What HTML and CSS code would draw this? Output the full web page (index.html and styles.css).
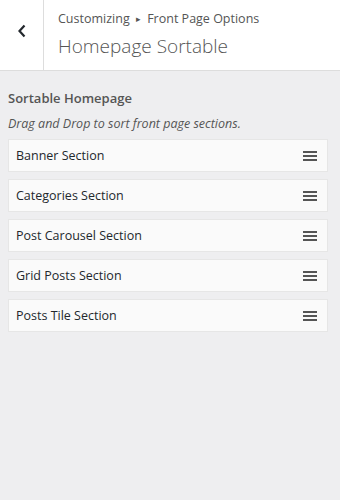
FILE: index.html
```html
<!DOCTYPE html>
<html lang="en">
  <head>
    <meta charset="UTF-8" />
    <meta name="viewport" content="width=device-width, initial-scale=1.0" />
    <title>Homepage Sortable</title>
    <link rel="stylesheet" href="styles.css">
  </head>
  <body>
    <div class="header">
      <button class="back" aria-label="Back">
        <svg width="10" height="14" viewBox="0 0 10 14"><path d="M7.5 1.5 L2.5 7 L7.5 12.5" fill="none" stroke="#23282d" stroke-width="2.2"/></svg>
      </button>
      <div class="titles">
        <div class="crumb">Customizing <span class="sep">&#9656;</span> Front Page Options</div>
        <div class="title">Homepage Sortable</div>
      </div>
    </div>

    <div class="panel">
      <div class="label">Sortable Homepage</div>
      <div class="desc">Drag and Drop to sort front page sections.</div>
      <ul class="sortable">
        <li class="item">Banner Section <span class="handle"></span></li>
        <li class="item">Categories Section <span class="handle"></span></li>
        <li class="item">Post Carousel Section <span class="handle"></span></li>
        <li class="item">Grid Posts Section <span class="handle"></span></li>
        <li class="item">Posts Tile Section <span class="handle"></span></li>
      </ul>
    </div>
  </body>
</html>
```

FILE: styles.css
```css
* {
  box-sizing: border-box;
}
body {
  margin: 0;
  font-family: "Open Sans", "Noto Sans", sans-serif;
  background: #eeeef0;
  color: #444;
  height: 500px;
}
.header {
  display: flex;
  height: 71px;
  background: #fff;
  border-bottom: 1px solid #ddd;
}
.back {
  width: 44px;
  border: none;
  border-right: 1px solid #ddd;
  background: #fff;
  display: flex;
  align-items: center;
  justify-content: center;
  padding: 0 0 8px;
}
.titles {
  padding: 9px 14px;
}
.crumb {
  font-size: 12.5px;
  color: #555;
  line-height: 20px;
}
.sep {
  font-size: 9px;
  margin: 0 3px;
  position: relative;
  top: -1px;
}
.title {
  font-size: 19px;
  font-weight: 300;
  color: #555;
  line-height: 28px;
  margin-top: 2px;
}
.panel {
  padding: 17px 8px 0 8px;
  width: 336px;
}
.label {
  font-size: 13px;
  font-weight: 600;
  color: #555;
  line-height: 20px;
  margin-bottom: 7px;
}
.desc {
  font-size: 12.5px;
  font-style: italic;
  color: #555;
  line-height: 18px;
  margin-bottom: 6px;
}
.sortable {
  list-style: none;
  margin: 0;
  padding: 0;
  display: flex;
  flex-direction: column;
  gap: 7px;
}
.item {
  display: flex;
  align-items: center;
  justify-content: space-between;
  height: 33px;
  padding: 0 10px 0 7px;
  background: #fafafa;
  border: 1px solid #e6e6e6;
  font-size: 12.5px;
  color: #23282d;
}
.handle {
  width: 14px;
  height: 10px;
  border-top: 2px solid #555;
  border-bottom: 2px solid #555;
  position: relative;
}
.handle::after {
  content: "";
  position: absolute;
  left: 0;
  right: 0;
  top: 2px;
  height: 2px;
  background: #555;
}
```
